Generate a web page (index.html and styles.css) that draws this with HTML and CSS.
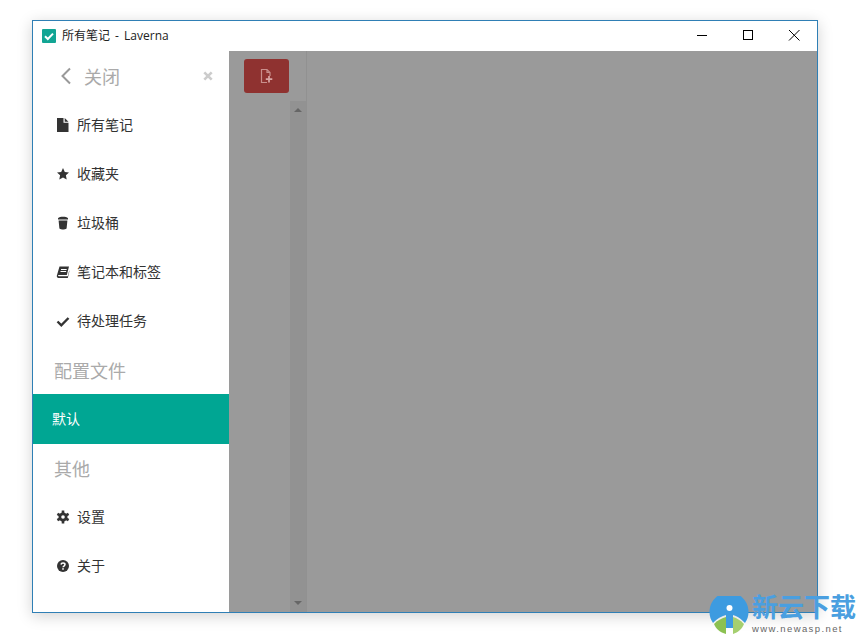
FILE: index.html
```html
<!DOCTYPE html>
<html lang="zh-CN">
<head>
    <meta charset="UTF-8">
    <title>所有笔记 - Laverna</title>
    <link rel="stylesheet" href="styles.css">
</head>
<body>
    <div class="window">
        <header class="titlebar">
            <svg class="app-icon" viewBox="0 0 14 14"><rect width="14" height="14" rx="1" fill="#12a594"/><path d="M3 7.200l2.800 2.800L11 4.600" fill="none" stroke="#fff" stroke-width="2"/></svg>
            <span class="app-title">所有笔记 - Laverna</span>
            <div class="win-buttons">
                <svg class="win-btn" viewBox="0 0 46 30"><path d="M18 14.500h10" stroke="#000" fill="none"/></svg>
                <svg class="win-btn" viewBox="0 0 46 30"><rect x="18.500" y="9.500" width="9" height="9" stroke="#000" fill="none"/></svg>
                <svg class="win-btn" viewBox="0 0 46 30"><path d="M18 9l10.500 10.500M28.500 9L18 19.500" stroke="#000" fill="none"/></svg>
            </div>
        </header>

        <div class="content">
            <nav class="sidebar">
                <div class="side-head">
                    <svg class="back-icon" viewBox="0 0 12 18"><path d="M10 1.500L2.500 9l7.500 7.500" fill="none" stroke="#999" stroke-width="2"/></svg>
                    <span class="back-label">关闭</span>
                    <svg class="close-icon" viewBox="0 0 10 10"><path d="M1.300 1.300l7.400 7.400M8.700 1.300L1.300 8.700" stroke="#ccc" stroke-width="2.600" fill="none"/></svg>
                </div>

                <a class="item">
                    <svg class="icon" viewBox="0 0 14 14"><path d="M1 0H7.500V4.800H12.500V14H1zM8.700 0L12.500 3.700H8.700z" fill="#333"/></svg>
                    所有笔记
                </a>
                <a class="item">
                    <svg class="icon" viewBox="0 0 14 14"><path d="M7 1l1.800 3.900 4.200.5-3.100 2.900.8 4.200L7 10.400l-3.700 2.100.8-4.200L1 5.400l4.200-.5z" fill="#333"/></svg>
                    收藏夹
                </a>
                <a class="item">
                    <svg class="icon" viewBox="0 0 14 14"><path d="M2 2.200C3 1 5 .8 7 .8s4 .2 5 1.400v1.300H2zM2.600 4.500h8.800l-.8 8c-1 .8-2.300 1-3.600 1s-2.600-.2-3.600-1z" fill="#333"/></svg>
                    垃圾桶
                </a>
                <a class="item">
                    <svg class="icon" viewBox="0 0 14 14"><path d="M3.500 1.500H13l-2.200 8.500H2.800c-.6 0-.8.4-.7.800.1.300.4.500.8.500h8.900l1.500-6v1.500L11.800 13H2.500C1.300 13 .6 12 .8 10.800zM5 4v1h5.500l.3-1zM4.500 6v1H10l.3-1z" fill="#333" fill-rule="evenodd"/></svg>
                    笔记本和标签
                </a>
                <a class="item">
                    <svg class="icon" viewBox="0 0 14 14"><path d="M1.500 7.500l3.800 3.800 7.200-7.300" fill="none" stroke="#333" stroke-width="2.400"/></svg>
                    待处理任务
                </a>

                <div class="side-title side-title-first">配置文件</div>
                <a class="profile">默认</a>
                <div class="side-title">其他</div>

                <a class="item">
                    <svg class="icon" viewBox="0 0 14 14"><circle cx="7" cy="7" r="3.300" fill="none" stroke="#333" stroke-width="2.400"/><path d="M7 7L7 .5M7 7L7 13.500M7 7L1.400 3.800M7 7L12.600 10.200M7 7L1.400 10.200M7 7L12.600 3.800" stroke="#333" stroke-width="2.600"/><circle cx="7" cy="7" r="1.800" fill="#fff"/></svg>
                    设置
                </a>
                <a class="item">
                    <svg class="icon" viewBox="0 0 14 14"><circle cx="7" cy="7" r="6" fill="#333"/><path d="M5 5.500C5.200 4.400 6 4 7 4c1.200 0 2 .7 2 1.600C9 7 7 7 7 8.300" fill="none" stroke="#fff" stroke-width="1.500"/><rect x="6.200" y="9.200" width="1.600" height="1.500" fill="#fff"/></svg>
                    关于
                </a>
            </nav>

            <section class="list-col">
                <div class="toolbar">
                    <button class="add-btn">
                        <svg viewBox="0 0 16 16" width="16" height="16"><path d="M8 14.500H2.500V1.500H8L11 4.500V8M8 1.500V4.500H11" fill="none" stroke="#c98f8c" stroke-width="1.200"/><path d="M10 8v6.500M6.800 11.200h6.500" stroke="#d9a7a5" stroke-width="1.700"/></svg>
                    </button>
                </div>
                <div class="list-body">
                    <div class="scrollbar">
                        <span class="arrow-up"></span>
                        <span class="arrow-down"></span>
                    </div>
                </div>
            </section>
            <section class="editor"></section>
        </div>
    </div>

    <div class="watermark">
        <svg class="wm-logo" viewBox="0 0 40 40">
            <path d="M4 27A19.500 19.500 0 1 1 36 27C31 22 28 20 24 19V32H17V19C13 20 9 22 4 27z" fill="#3d9be0"/>
            <path d="M5 28C9 24 13 22 17 21V38C11 36.500 7 33 5 28z" fill="#8cc152"/>
            <path d="M24 21C28 22 31 24 35 28C33 33 29 36.500 24 38z" fill="#a5cf6f"/>
            <circle cx="20.500" cy="12" r="3" fill="#fff"/>
        </svg>
        <div class="wm-text">
            <div class="wm-name">新云下载</div>
            <div class="wm-url">www.newasp.net</div>
        </div>
    </div>
</body>
</html>
```

FILE: styles.css
```css
html, body {
    margin: 0;
    height: 643px;
    overflow: hidden;
    background: #fff;
    font-family: "Noto Sans CJK SC", "Noto Sans", sans-serif;
    color: #333;
}

.window {
    box-sizing: border-box;
    width: 786px;
    height: 593px;
    margin: 20px 0 0 32px;
    border: 1px solid #2f7fb5;
    background: #fff;
    box-shadow: 0 3px 14px rgba(0,0,0,0.18);
    display: flex;
    flex-direction: column;
}

.titlebar {
    height: 30px;
    flex-shrink: 0;
    display: flex;
    align-items: center;
    padding-left: 9px;
}

.app-icon {
    width: 14px;
    height: 14px;
    margin-right: 6px;
    margin-bottom: 1px;
}

.app-title {
    font-family: "Open Sans", "Noto Sans CJK SC", sans-serif;
    font-size: 12px;
    word-spacing: 2px;
    color: #222;
    margin-bottom: 2px;
}

.win-buttons {
    margin-left: auto;
    display: flex;
}

.win-btn {
    width: 46px;
    height: 30px;
}

.content {
    flex: 1;
    display: flex;
    min-height: 0;
}

.sidebar {
    width: 196px;
    flex-shrink: 0;
    background: #fff;
}

.side-head {
    height: 50px;
    display: flex;
    align-items: center;
    padding-left: 27px;
}

.back-icon {
    width: 12px;
    height: 18px;
    margin-right: 12px;
}

.back-label {
    font-size: 18px;
    color: #aaa;
}

.close-icon {
    width: 10px;
    height: 10px;
    margin-left: auto;
    margin-right: 16px;
}

.item {
    box-sizing: border-box;
    height: 49px;
    display: flex;
    align-items: center;
    padding: 0 0 4px 23px;
    font-size: 14px;
    color: #333;
}

.icon {
    width: 14px;
    height: 14px;
    margin: 2px 7px 0 0;
    flex-shrink: 0;
}

.side-title {
    box-sizing: border-box;
    height: 49px;
    display: flex;
    align-items: center;
    padding: 0 0 2px 21px;
    font-size: 18px;
    color: #aaa;
}

.side-title-first {
    height: 48px;
    padding-top: 2px;
}

.profile {
    box-sizing: border-box;
    height: 50px;
    display: flex;
    align-items: center;
    padding: 0 0 2px 19px;
    font-size: 14px;
    color: #fff;
    background: #00a693;
}

.list-col {
    width: 78px;
    flex-shrink: 0;
    background: #9a9a9a;
    display: flex;
    flex-direction: column;
    border-right: 1px solid #919191;
    box-sizing: border-box;
}

.toolbar {
    height: 50px;
    flex-shrink: 0;
    padding: 8px 0 0 15px;
    box-sizing: border-box;
}

.add-btn {
    width: 45px;
    height: 34px;
    padding: 0;
    border: 0;
    border-radius: 3px;
    background: #8f3230;
    display: flex;
    align-items: center;
    justify-content: center;
}

.list-body {
    flex: 1;
    display: flex;
    justify-content: flex-end;
}

.scrollbar {
    width: 16px;
    background: #929292;
    display: flex;
    flex-direction: column;
    justify-content: space-between;
    align-items: center;
    padding: 7px 0;
    box-sizing: border-box;
}

.arrow-up {
    border: 4px solid transparent;
    border-top: 0;
    border-bottom: 4px solid #666;
}

.arrow-down {
    border: 4px solid transparent;
    border-bottom: 0;
    border-top: 4px solid #666;
}

.editor {
    flex: 1;
    background: #9a9a9a;
}

/* site watermark sits over the window corner */
.watermark {
    position: absolute;
    left: 709px;
    top: 596px;
    display: flex;
    gap: 3px;
}

.wm-logo {
    width: 40px;
    height: 40px;
}

.wm-name {
    font-family: "Liberation Sans", "Noto Sans CJK SC", sans-serif;
    font-size: 26px;
    line-height: 24px;
    font-weight: 700;
    color: #4a9fe0;
    white-space: nowrap;
}

.wm-url {
    font-family: "Liberation Sans", sans-serif;
    font-size: 9.500px;
    line-height: 11px;
    margin-top: 3px;
    letter-spacing: 1.400px;
    color: #666;
    white-space: nowrap;
}
```
